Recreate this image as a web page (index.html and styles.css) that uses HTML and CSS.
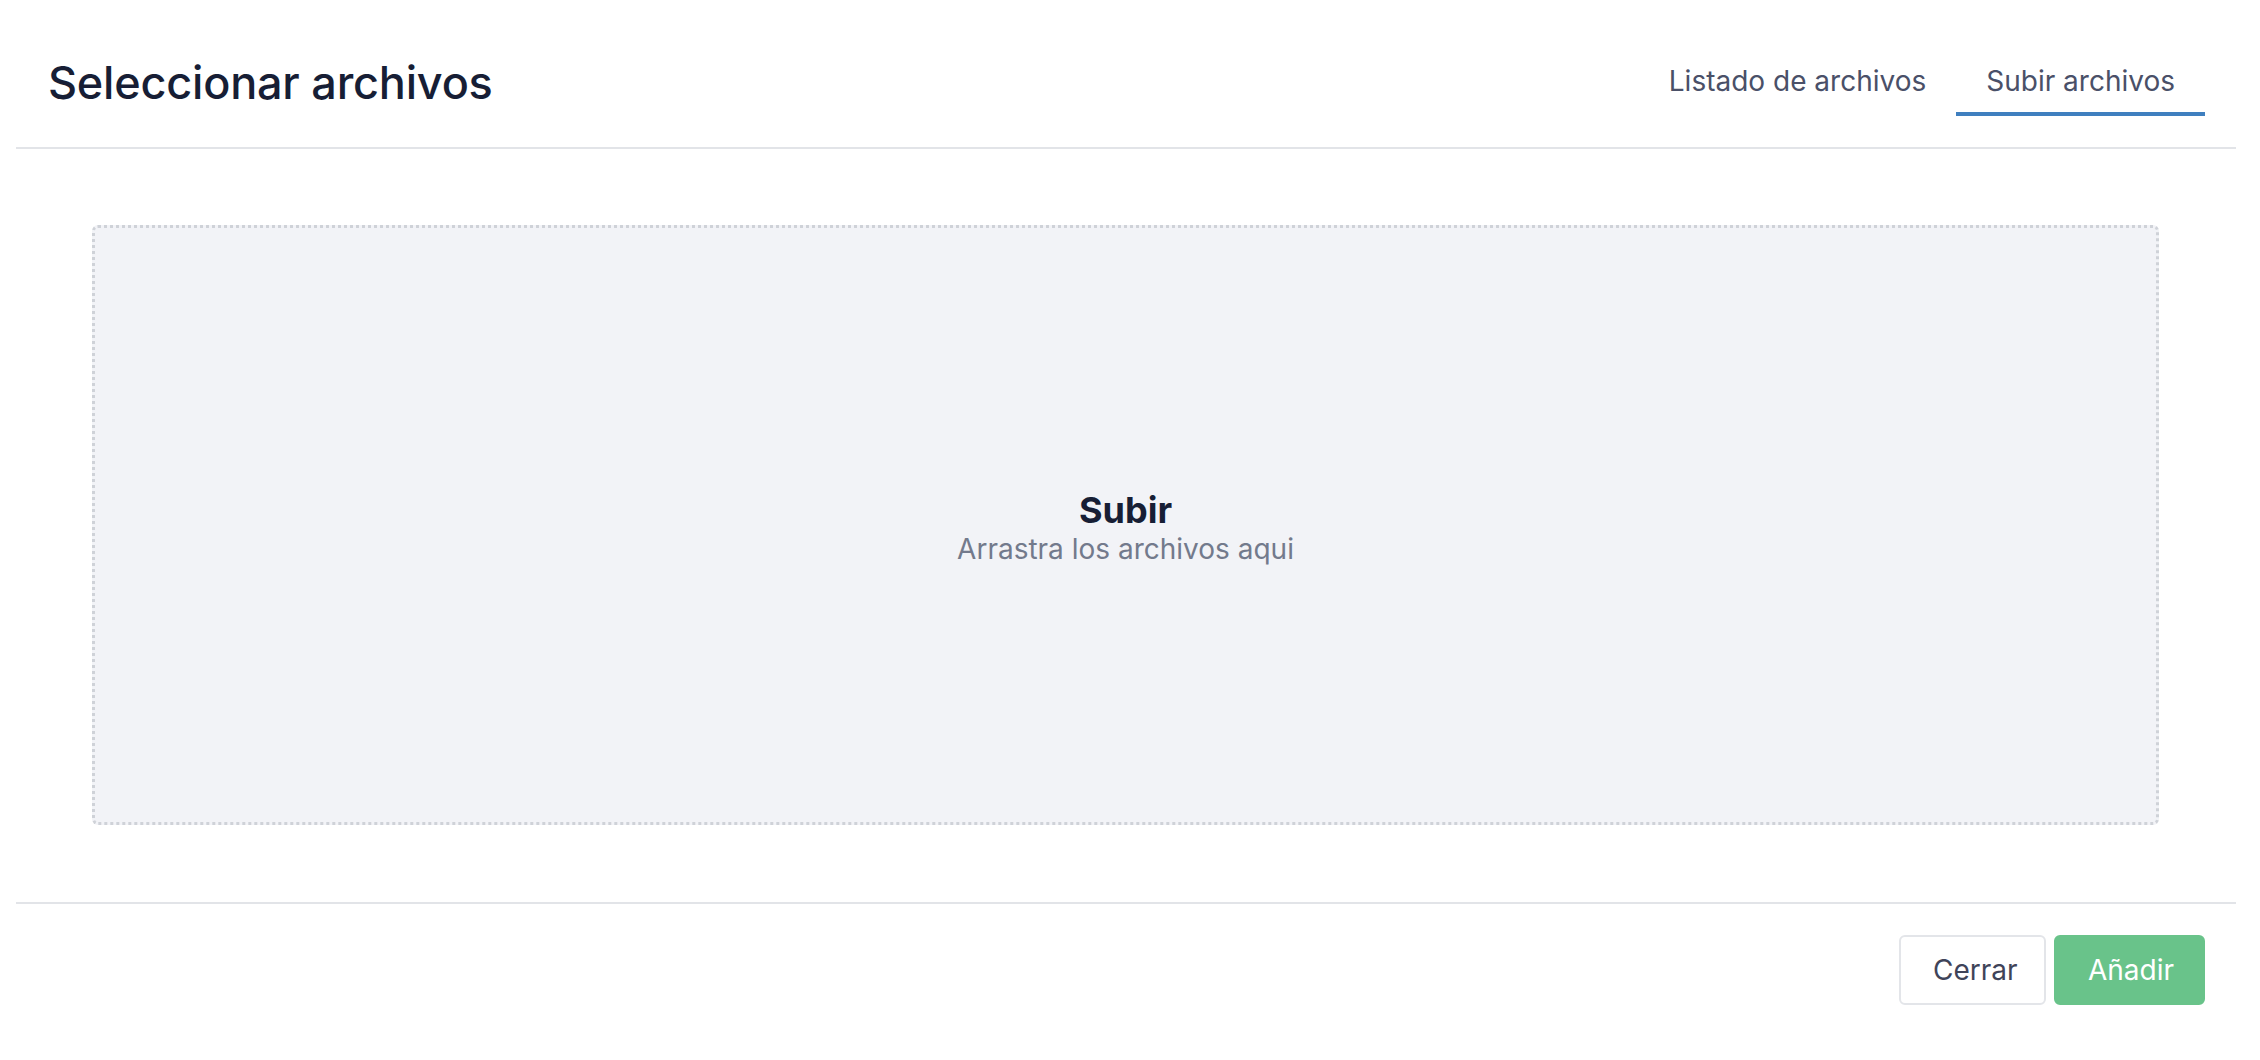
FILE: index.html
```html
<!DOCTYPE html>
<html lang="es">
<head>
<meta charset="utf-8">
<title>Seleccionar archivos</title>
<link rel="stylesheet" href="styles.css">
</head>
<body>
<div class="modal">
  <header class="modal-header">
    <h1 class="modal-title">Seleccionar archivos</h1>
    <nav class="tabs">
      <a class="tab">Listado de archivos</a>
      <a class="tab tab-active">Subir archivos</a>
    </nav>
  </header>
  <main class="modal-body">
    <div class="dropzone">
      <div class="drop-title">Subir</div>
      <div class="drop-sub">Arrastra los archivos aqui</div>
    </div>
  </main>
  <footer class="modal-footer">
    <button class="btn btn-secondary">Cerrar</button>
    <button class="btn btn-primary">Añadir</button>
  </footer>
</div>
</body>
</html>
```

FILE: styles.css
```css
* { box-sizing: border-box; }
html, body {
  margin: 0;
  padding: 0;
  background: #ffffff;
}
body {
  font-family: Inter, "Noto Sans", sans-serif;
  color: #1a2036;
}
.modal {
  margin: 0 24px 0 16px;
}
.modal-header {
  display: flex;
  justify-content: space-between;
  align-items: flex-end;
  height: 149px;
  padding: 0 31px 0 32px;
  border-bottom: 2px solid #e2e4e8;
}
.modal-title {
  margin: 0 0 36px 0;
  font-size: 45px;
  font-weight: 500;
  line-height: 56px;
  color: #171e35;
  letter-spacing: -0.2px;
}
.tabs {
  display: flex;
  gap: 0;
  margin-bottom: 31px;
}
.tab {
  display: block;
  padding: 0 30px;
  height: 84px;
  line-height: 98px;
  font-size: 28px;
  color: #4a5068;
  border-bottom: 4px solid transparent;
  white-space: nowrap;
}
.tab-active {
  border-bottom-color: #3f7fbf;
}
.modal-body {
  padding: 76px 77px 77px 76px;
  border-bottom: 2px solid #e2e4e8;
}
.dropzone {
  height: 600px;
  background: #f2f3f7;
  border: 3px dotted #cfd2d8;
  border-radius: 6px;
  display: flex;
  flex-direction: column;
  align-items: center;
  justify-content: center;
  padding-top: 8px;
}
.drop-title {
  font-size: 36px;
  font-weight: 700;
  line-height: 40px;
  color: #171e35;
}
.drop-sub {
  font-size: 28px;
  line-height: 38px;
  color: #737a8c;
}
.modal-footer {
  display: flex;
  justify-content: flex-end;
  gap: 8px;
  padding: 31px 31px 0 0;
}
.btn {
  height: 70px;
  padding: 0 32px;
  font-family: Inter, "Noto Sans", sans-serif;
  font-size: 28px;
  border-radius: 6px;
  cursor: pointer;
}
.btn-secondary {
  width: 147px;
  background: #ffffff;
  border: 2px solid #e3e5e9;
  color: #3f4459;
}
.btn-primary {
  width: 151px;
  background: #69c38a;
  border: 2px solid #69c38a;
  color: #ffffff;
}
```
